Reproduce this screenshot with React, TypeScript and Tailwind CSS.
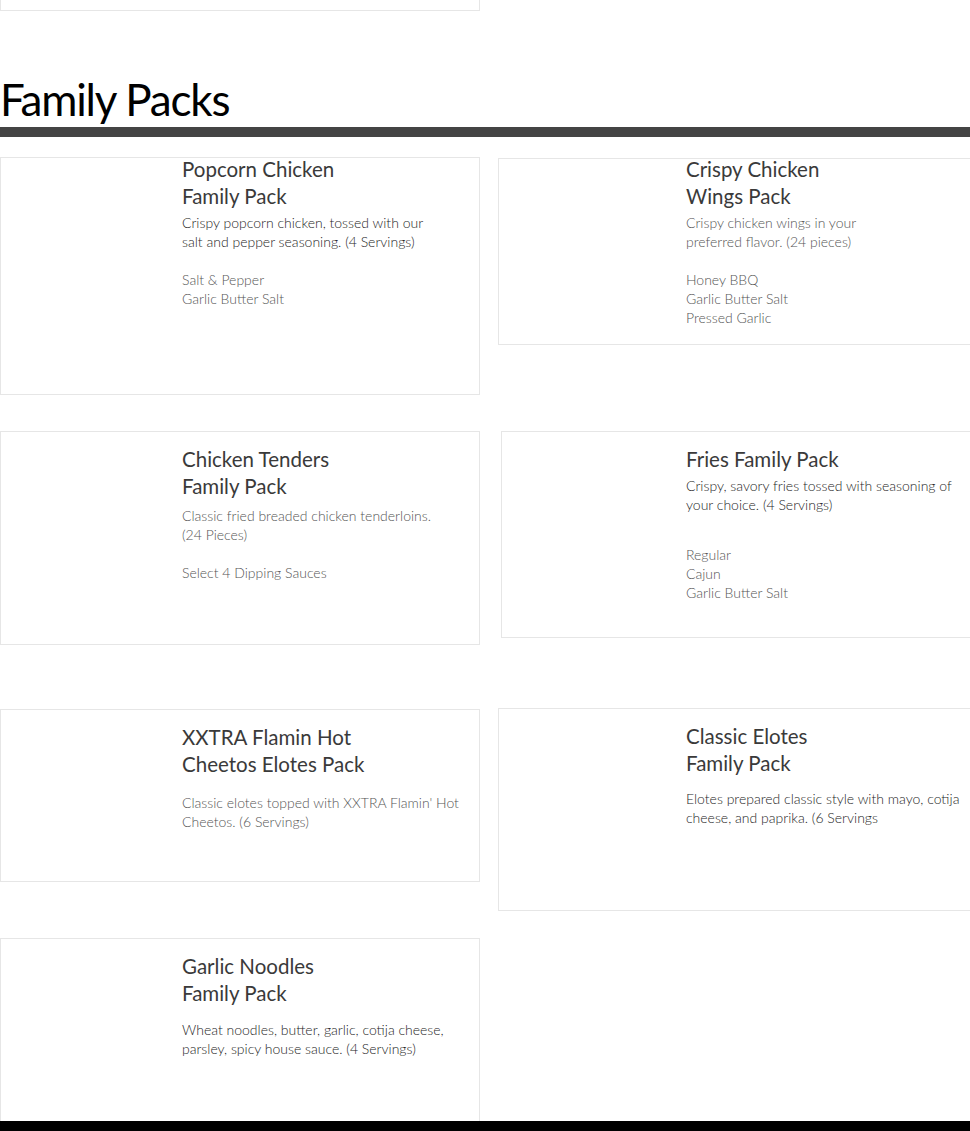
const font = { fontFamily: "Lato, 'Open Sans', sans-serif" }

type Pack = {
  title: string[]
  desc: string[]
  dark: boolean
  options?: string[]
  descGap: string
  optGap?: string
}

const packs: Record<string, Pack> = {
  popcorn: {
    title: ["Popcorn Chicken", "Family Pack"],
    desc: ["Crispy popcorn chicken, tossed with our", "salt and pepper seasoning. (4 Servings)"],
    dark: true,
    options: ["Salt & Pepper", "Garlic Butter Salt"],
    descGap: "mt-[3px]",
    optGap: "mt-[19px]",
  },
  wings: {
    title: ["Crispy Chicken", "Wings Pack"],
    desc: ["Crispy chicken wings in your", "preferred flavor. (24 pieces)"],
    dark: false,
    options: ["Honey BBQ", "Garlic Butter Salt", "Pressed Garlic"],
    descGap: "mt-[3px]",
    optGap: "mt-[19px]",
  },
  tenders: {
    title: ["Chicken Tenders", "Family Pack"],
    desc: ["Classic fried breaded chicken tenderloins.", "(24 Pieces)"],
    dark: false,
    options: ["Select 4 Dipping Sauces"],
    descGap: "mt-[6px]",
    optGap: "mt-[19px]",
  },
  fries: {
    title: ["Fries Family Pack"],
    desc: ["Crispy, savory fries tossed with seasoning of", "your choice. (4 Servings)"],
    dark: true,
    options: ["Regular", "Cajun", "Garlic Butter Salt"],
    descGap: "mt-[3px]",
    optGap: "mt-[31px]",
  },
  cheetos: {
    title: ["XXTRA Flamin Hot", "Cheetos Elotes Pack"],
    desc: ["Classic elotes topped with XXTRA Flamin' Hot", "Cheetos. (6 Servings)"],
    dark: false,
    descGap: "mt-[15px]",
  },
  elotes: {
    title: ["Classic Elotes", "Family Pack"],
    desc: ["Elotes prepared classic style with mayo, cotija", "cheese, and paprika. (6 Servings"],
    dark: true,
    descGap: "mt-[12px]",
  },
  noodles: {
    title: ["Garlic Noodles", "Family Pack"],
    desc: ["Wheat noodles, butter, garlic, cotija cheese,", "parsley, spicy house sauce. (4 Servings)"],
    dark: true,
    descGap: "mt-[13px]",
  },
}

const PackText = ({ pack, className }: { pack: Pack; className: string }) => (
  <div className={className}>
    <h3 className="text-[20.5px] leading-[27px] font-normal text-[#3a3a3a] whitespace-nowrap">
      {pack.title.map((line) => (
        <div key={line}>{line}</div>
      ))}
    </h3>
    <p
      className={`${pack.descGap} text-[14px] leading-[19px] font-light whitespace-nowrap ${
        pack.dark ? "text-[#262626]" : "text-[#555555]"
      }`}
    >
      {pack.desc.map((line) => (
        <span key={line} className="block">{line}</span>
      ))}
    </p>
    {pack.options && (
      <ul className={`${pack.optGap} text-[14px] leading-[19px] font-light text-[#555555] whitespace-nowrap`}>
        {pack.options.map((opt) => (
          <li key={opt}>{opt}</li>
        ))}
      </ul>
    )}
  </div>
)

export default function App() {
  return (
    <div className="w-[970px] h-[1131px] overflow-hidden bg-white" style={font}>
      {/* end of previous section's card */}
      <div className="w-[480px] h-[11px] border border-t-0 border-[#e6e6e6]" />

      <h2 className="mt-[60px] text-[44px] leading-[56px] font-normal text-black tracking-[-1.2px]">
        Family Packs
      </h2>
      <div className="h-[10px] bg-[#444444]" />

      {/* row 1 */}
      <div className="mt-[20px] flex items-start">
        <div className="w-[480px] h-[238px] shrink-0 border border-[#e6e6e6]">
          <PackText pack={packs.popcorn} className="pl-[181px] -mt-[2px]" />
        </div>
        <div className="ml-[18px] mt-[1px] w-[480px] h-[187px] shrink-0 border border-[#e6e6e6]">
          <PackText pack={packs.wings} className="pl-[187px] -mt-[3px]" />
        </div>
      </div>

      {/* row 2 */}
      <div className="mt-[36px] flex items-start">
        <div className="w-[480px] h-[214px] shrink-0 border border-[#e6e6e6]">
          <PackText pack={packs.tenders} className="pl-[181px] mt-[14px]" />
        </div>
        <div className="ml-[21px] w-[480px] h-[207px] shrink-0 border border-[#e6e6e6]">
          <PackText pack={packs.fries} className="pl-[184px] mt-[14px]" />
        </div>
      </div>

      {/* row 3 */}
      <div className="mt-[63px] flex items-start">
        <div className="mt-[1px] w-[480px] h-[173px] shrink-0 border border-[#e6e6e6]">
          <PackText pack={packs.cheetos} className="pl-[181px] mt-[14px]" />
        </div>
        <div className="ml-[18px] w-[480px] h-[203px] shrink-0 border border-[#e6e6e6]">
          <PackText pack={packs.elotes} className="pl-[187px] mt-[14px]" />
        </div>
      </div>

      {/* row 4 */}
      <div className="mt-[27px] flex items-start">
        <div className="w-[480px] h-[183px] shrink-0 border border-b-0 border-[#e6e6e6]">
          <PackText pack={packs.noodles} className="pl-[181px] mt-[14px]" />
        </div>
      </div>

      <footer className="h-[20px] bg-black" />
    </div>
  )
}
